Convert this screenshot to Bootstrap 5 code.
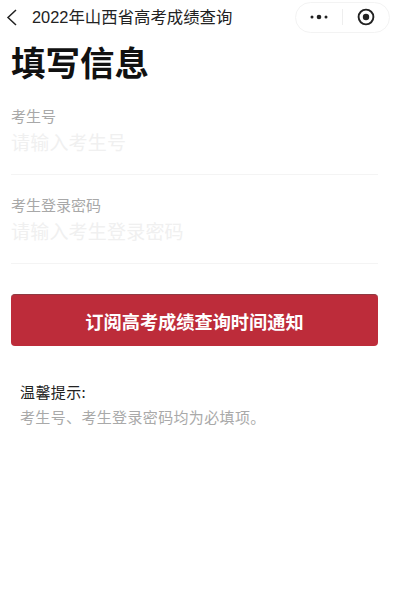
<!DOCTYPE html>
<html lang="zh">
<head>
<meta charset="utf-8">
<title>填写信息</title>
<link href="https://cdn.jsdelivr.net/npm/bootstrap@5.3.0/dist/css/bootstrap.min.css" rel="stylesheet">
<style>
html,body{height:596px;overflow:hidden;background:#fff;}
body{font-family:"Noto Sans CJK SC","Liberation Sans",sans-serif;color:#111;}
.top-bar{height:34px;padding:0 10px 0 6px;}
.back-ico{width:11px;height:17px;margin-right:15px;flex:none;}
.top-title{font-size:16.4px;line-height:20px;color:#222;white-space:nowrap;font-family:"Liberation Sans","Noto Sans CJK SC",sans-serif;}
.capsule{width:95px;height:31px;border:1px solid #f3f3f3;border-radius:16px;flex:none;}
.capsule-half{width:47px;height:100%;}
.capsule-sep{width:1px;height:16px;background:#eee;}
.page-head{font-size:34.5px;line-height:44px;font-weight:700;color:#111;margin:5px 0 0 11px;}
.form-zone{padding:0 22px 0 11px;margin-top:23px;}
.entry{height:69px;border-bottom:1px solid #f4f4f4;margin-bottom:20px;}
.entry-label{font-size:15px;line-height:20px;color:#a8a8a8;}
.entry-input{font-size:19px;line-height:26px;color:#f0f0f0;margin-top:3px;letter-spacing:.2px;}
.btn-zone{padding:0 22px 0 11px;margin-top:30px;}
.sub-btn{display:block;height:52px;background:#bd2c3a;border:0;border-top:1px solid #8f3a42;border-radius:4px;color:#fff;font-size:18.2px;font-weight:700;line-height:50px;padding:0;}
.tip-zone{padding:0 0 0 20px;margin-top:36px;}
.tip-head{font-size:15px;line-height:20px;color:#222;letter-spacing:.4px;}
.tip-body{font-size:15px;line-height:20px;color:#a9a9a9;margin-top:5px;letter-spacing:.35px;}
</style>
</head>
<body>
<div class="top-bar d-flex align-items-center">
  <svg class="back-ico" viewBox="0 0 11 17" fill="none" stroke="#222" stroke-width="1.5"><path d="M10 1 2 8.5 10 16"/></svg>
  <div class="top-title">2022年山西省高考成绩查询</div>
  <div class="capsule ms-auto d-flex align-items-center">
    <div class="capsule-half d-flex align-items-center justify-content-center">
      <svg width="20" height="6" viewBox="0 0 20 6" fill="#222"><circle cx="3" cy="3" r="1.5"/><circle cx="10" cy="3" r="2.3"/><circle cx="17" cy="3" r="1.5"/></svg>
    </div>
    <div class="capsule-sep"></div>
    <div class="capsule-half d-flex align-items-center justify-content-center">
      <svg width="18" height="18" viewBox="0 0 18 18"><circle cx="9" cy="9" r="7.4" fill="none" stroke="#222" stroke-width="1.9"/><circle cx="9" cy="9" r="3.2" fill="#222"/></svg>
    </div>
  </div>
</div>
<h1 class="page-head">填写信息</h1>
<div class="form-zone">
  <div class="entry">
    <div class="entry-label">考生号</div>
    <div class="entry-input">请输入考生号</div>
  </div>
  <div class="entry">
    <div class="entry-label">考生登录密码</div>
    <div class="entry-input">请输入考生登录密码</div>
  </div>
</div>
<div class="btn-zone">
  <button type="button" class="btn sub-btn w-100">订阅高考成绩查询时间通知</button>
</div>
<div class="tip-zone">
  <div class="tip-head">温馨提示:</div>
  <div class="tip-body">考生号、考生登录密码均为必填项。</div>
</div>
<script src="https://cdn.jsdelivr.net/npm/bootstrap@5.3.0/dist/js/bootstrap.bundle.min.js"></script>
</body>
</html>
